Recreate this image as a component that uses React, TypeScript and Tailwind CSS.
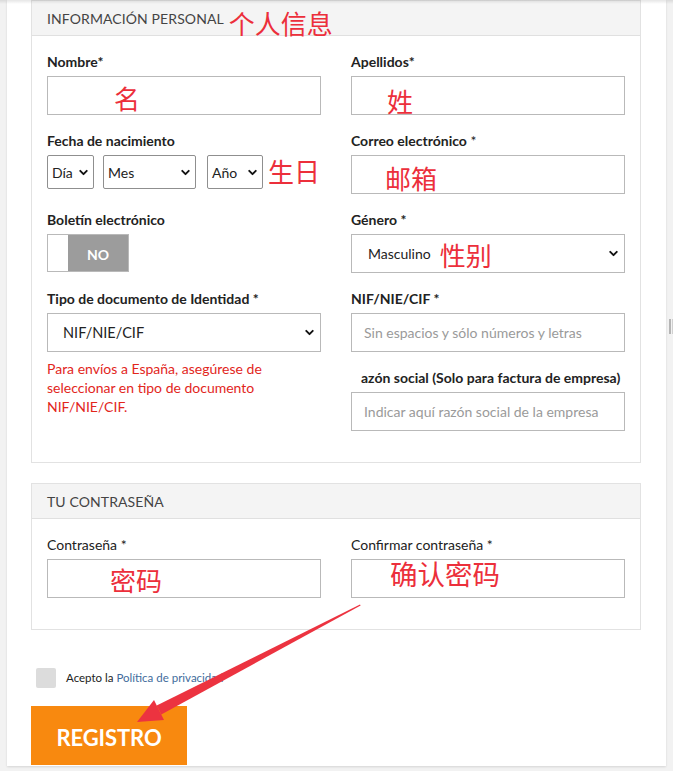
import { ChevronDown } from "lucide-react";

const font = { fontFamily: "Lato, 'Noto Sans CJK SC', sans-serif" };

const Label = ({ children, className = "" }: { children: React.ReactNode; className?: string }) => (
  <div className={`h-[16px] mb-[6px] text-[14px] leading-[16px] font-bold text-[#222] whitespace-nowrap ${className}`}>{children}</div>
);

const Note = ({ children, className = "" }: { children: React.ReactNode; className?: string }) => (
  <span className={`text-[26px] leading-none text-[#ec2f3b] ${className}`} style={{ fontFamily: "'Noto Sans CJK SC', sans-serif" }}>
    {children}
  </span>
);

const Box = ({ children, className = "" }: { children?: React.ReactNode; className?: string }) => (
  <div className={`h-[39px] border border-[#b9b9b9] bg-white flex items-center ${className}`}>{children}</div>
);

const Chevron = () => <ChevronDown size={13} strokeWidth={3.5} className="text-[#111] shrink-0" />;

const Card = ({ title, note, children }: { title: string; note?: string; children: React.ReactNode }) => (
  <div className="border border-[#e2e2e2] bg-white">
    <div className="h-[35px] bg-[#f4f4f4] border-b border-[#e0e0e0] pl-[15px] flex items-center">
      <span className="text-[14px] tracking-[0.1px] text-[#444] uppercase">{title}</span>
      {note && <Note className="ml-[5px] mt-[10px]">{note}</Note>}
    </div>
    <div className="px-[15px] pt-[18px] pb-[13px] grid grid-cols-2 gap-x-[30px]">{children}</div>
  </div>
);

export default function App() {
  return (
    <div className="relative h-[771px] bg-[#f2f2f2] flex overflow-hidden" style={font}>
      <div className="w-[7px]" />
      <div className="w-[659px] h-[766px] bg-white shadow-[0_1px_2px_rgba(0,0,0,0.12)] pl-[24px] pr-[25px] flex flex-col">
        <Card title="Información personal" note="个人信息">
          <div className="mb-[18px]">
            <Label>Nombre*</Label>
            <Box className="pl-[66px]">
              <Note className="mt-[4px]">名</Note>
            </Box>
          </div>
          <div className="mb-[18px]">
            <Label>Apellidos*</Label>
            <Box className="pl-[35px]">
              <Note className="mt-[10px]">姓</Note>
            </Box>
          </div>

          <div className="mb-[18px]">
            <Label>Fecha de nacimiento</Label>
            <div className="flex items-center h-[39px]">
              <div className="w-[47px] h-[34px] border border-[#8f8f8f] rounded-[2px] flex items-center justify-between pl-[4px] pr-[3px] text-[14px] text-[#222] self-start">
                Día <Chevron />
              </div>
              <div className="ml-[9px] w-[93px] h-[34px] border border-[#8f8f8f] rounded-[2px] flex items-center justify-between pl-[4px] pr-[3px] text-[14px] text-[#222] self-start">
                Mes <Chevron />
              </div>
              <div className="ml-[11px] w-[56px] h-[34px] border border-[#8f8f8f] rounded-[2px] flex items-center justify-between pl-[4px] pr-[3px] text-[14px] text-[#222] self-start">
                Año <Chevron />
              </div>
              <Note className="ml-[5px] self-start mt-[3px]">生日</Note>
            </div>
          </div>
          <div className="mb-[18px]">
            <Label className="font-normal">
              <span className="font-bold">Correo electrónico</span> *
            </Label>
            <Box className="pl-[33px]">
              <Note className="mt-[6px]">邮箱</Note>
            </Box>
          </div>

          <div className="mb-[18px]">
            <Label>Boletín electrónico</Label>
            <div className="w-[82px] h-[38px] border border-[#b9b9b9] flex">
              <div className="w-[20px] bg-white" />
              <div className="flex-1 bg-[#9c9c9c] flex items-center justify-center text-[14px] font-bold text-white pt-[2px]">NO</div>
            </div>
          </div>
          <div className="mb-[18px]">
            <Label>Género *</Label>
            <Box className="pl-[16px] pr-[4px]">
              <span className="text-[14px] text-[#222]">Masculino</span>
              <Note className="ml-[9px] mt-[2px]">性别</Note>
              <span className="flex-1" />
              <Chevron />
            </Box>
          </div>

          <div className="mb-[18px]">
            <Label>Tipo de documento de Identidad *</Label>
            <Box className="pl-[15px] pr-[4px] justify-between">
              <span className="text-[14.5px] text-[#222]">NIF/NIE/CIF</span>
              <Chevron />
            </Box>
            <p className="mt-[7px] text-[14px] leading-[19px] text-[#e2261c]">
              Para envíos a España, asegúrese de
              <br />
              seleccionar en tipo de documento
              <br />
              NIF/NIE/CIF.
            </p>
          </div>
          <div className="mb-[18px]">
            <Label>NIF/NIE/CIF *</Label>
            <Box className="pl-[12px] mb-[18px]">
              <span className="text-[14px] text-[#9a9a9a]">Sin espacios y sólo números y letras</span>
            </Box>
            <Label className="pl-[10px]">azón social (Solo para factura de empresa)</Label>
            <Box className="pl-[12px]">
              <span className="text-[14px] text-[#9a9a9a]">Indicar aquí razón social de la empresa</span>
            </Box>
          </div>
        </Card>

        <div className="h-[20px]" />

        <Card title="Tu contraseña">
          <div className="mb-[18px]">
            <Label className="font-normal">Contraseña *</Label>
            <Box className="pl-[62px]">
              <Note className="mt-[2px]">密码</Note>
            </Box>
          </div>
          <div className="mb-[18px]">
            <Label className="font-normal">Confirmar contraseña *</Label>
            <Box className="pl-[38px]">
              <Note className="-mt-[9px] text-[27.5px]">确认密码</Note>
            </Box>
          </div>
        </Card>

        <div className="mt-[38px] ml-[5px] flex items-center h-[20px]">
          <div className="w-[20px] h-[20px] bg-[#dcdcdc] rounded-[2px]" />
          <span className="ml-[10px] text-[11.5px] text-[#222]">
            Acepto la <span className="text-[#3f6c9c]">Política de privacidad</span> *
          </span>
        </div>

        <div className="mt-[18px] w-[156px] h-[59px] bg-[#f8890f] flex items-center justify-center">
          <span className="text-[22px] font-bold text-white tracking-[-0.1px] mt-[3px]">REGISTRO</span>
        </div>
      </div>
      <div className="w-[7px] flex flex-col items-end">
        <div className="mt-[319px] w-[4px] h-[15px] border-l-2 border-[#b5b5b5] border-r border-r-[#d0d0d0]" />
      </div>

      <div className="pointer-events-none absolute top-0 inset-x-0 h-[4px] bg-gradient-to-b from-black/10 to-transparent" />

      <svg className="pointer-events-none absolute left-0 top-0" width="673" height="771" viewBox="0 0 673 771">
        <polygon points="360,604.5 360.6,605.5 161.3,714.5 156.7,705.5" fill="#ec3340" />
        <polygon points="137,722 154,700 164,720" fill="#ec3340" />
      </svg>
    </div>
  );
}
